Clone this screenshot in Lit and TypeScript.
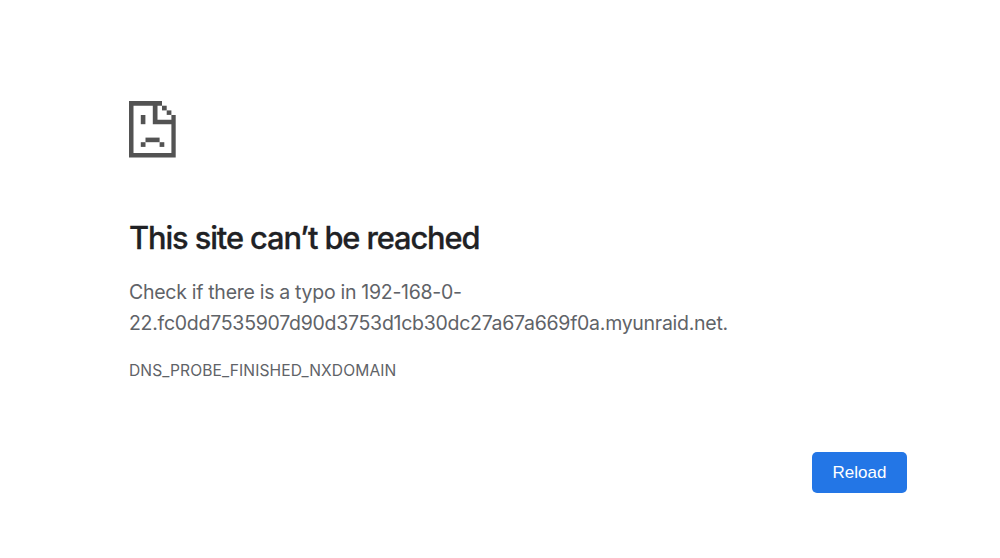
import { LitElement, html, css, svg } from 'lit';
import { customElement, property } from 'lit/decorators.js';

@customElement('sad-page-icon')
class SadPageIcon extends LitElement {
  static styles = css`
    :host {
      display: block;
      width: 47px;
      height: 57px;
    }

    svg {
      display: block;
      fill: #535353;
    }
  `;

  // [x, y, width, height] of the pixel blocks inside the page outline
  blocks = [
    [33, 4.7, 4.7, 4.7],
    [37.7, 9.4, 4.7, 4.5],
    [11.8, 14, 4.6, 9.2],
    [16.5, 36.6, 14.1, 4.6],
    [11.8, 41.2, 4.7, 4.7],
    [30.6, 41.2, 4.7, 4.7],
  ];

  render() {
    return html`
      <svg width="47" height="57" viewBox="0 0 47 57">
        <path
          fill-rule="evenodd"
          d="M0 0H33V4.7H28.5V18.7H42.4V14H46.7V56.6H0ZM4.5 4.7V52.1H42.4V23.2H23.8V4.7Z"
        />
        ${this.blocks.map(
          ([x, y, w, h]) => svg`<rect x=${x} y=${y} width=${w} height=${h} />`
        )}
      </svg>
    `;
  }
}

@customElement('app-root')
class AppRoot extends LitElement {
  @property({ type: String }) host = '192-168-0-22.fc0dd7535907d90d3753d1cb30dc27a67a669f0a.myunraid.net';
  @property({ type: String }) errorCode = 'DNS_PROBE_FINISHED_NXDOMAIN';

  static styles = css`
    :host {
      display: block;
      box-sizing: border-box;
      height: 558px;
      padding: 101px 93px 0 129px;
      overflow: hidden;
      background: #fff;
      color: #5f6368;
      font-family: Inter, 'Liberation Sans', sans-serif;
      font-size: 19.5px;
      line-height: 31.2px;
    }

    h1 {
      margin: 61px 0 0;
      color: #202124;
      font-size: 30.8px;
      font-weight: 500;
      line-height: 38px;
      letter-spacing: -1.1px;
      white-space: nowrap;
      -webkit-text-stroke: 0.3px #202124;
    }

    p {
      margin: 20px 0 0;
      letter-spacing: -0.27px;
      word-spacing: -0.1px;
    }

    .error-code {
      margin-top: 16px;
      font-size: 15.6px;
      line-height: 31px;
      letter-spacing: 0.1px;
    }

    .buttons {
      display: flex;
      justify-content: flex-end;
      margin-top: 66px;
    }

    button {
      width: 95px;
      height: 41px;
      padding: 0;
      border: 0;
      border-radius: 5px;
      background: #2376e6;
      color: #fff;
      font-family: 'Liberation Sans', Arial, sans-serif;
      font-size: 17px;
    }
  `;

  reload() {
    window.location.reload();
  }

  render() {
    return html`
      <sad-page-icon></sad-page-icon>
      <h1>This site can’t be reached</h1>
      <p>${`Check if there is a typo in ${this.host}.`}</p>
      <div class="error-code">${this.errorCode}</div>
      <div class="buttons">
        <button @click="${this.reload}">Reload</button>
      </div>
    `;
  }
}
